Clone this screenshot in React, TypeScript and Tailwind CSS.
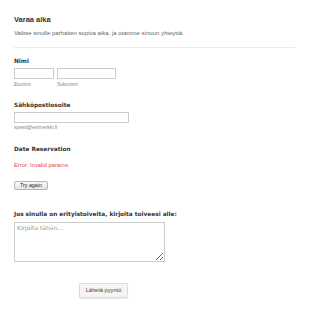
export default function App() {
  return (
    <div className="w-[310px] h-[312px] bg-white font-['Liberation_Sans',Arial,sans-serif] text-[#333]">
      <div className="flex flex-col items-start px-[14px] pt-[15px]">
        <h1 className="text-[7.5px] leading-[10px] font-bold text-[#333]">Varaa aika</h1>
        <p className="mt-[4px] text-[6px] leading-[8px] text-[#666]">
          Valitse sinulle parhaiten sopiva aika, ja otamme sinuun yhteyttä.
        </p>
        <div className="mt-[10px] w-[281px] border-t border-[#ececec]" />

        <label className="mt-[9px] text-[5.8px] leading-[8px] font-bold font-['DejaVu_Sans',sans-serif] text-[#333]">
          Nimi
        </label>
        <div className="mt-[3px] flex gap-[3px]">
          <div className="flex flex-col">
            <input className="w-[40px] h-[11px] border border-[#ccc] bg-white" />
            <span className="mt-[2px] text-[5px] leading-[6px] text-[#888]">Etunimi</span>
          </div>
          <div className="flex flex-col">
            <input className="w-[59px] h-[11px] border border-[#ccc] bg-white" />
            <span className="mt-[2px] text-[5px] leading-[6px] text-[#888]">Sukunimi</span>
          </div>
        </div>

        <label className="mt-[14px] text-[5.8px] leading-[8px] font-bold font-['DejaVu_Sans',sans-serif] text-[#333]">
          Sähköpostiosoite
        </label>
        <input className="mt-[3px] w-[115px] h-[11px] border border-[#ccc] bg-white" />
        <span className="mt-[1px] text-[5px] leading-[6px] text-[#888]">spesti@esimerkki.fi</span>

        <h2 className="mt-[15px] text-[5.8px] leading-[8px] font-bold font-['DejaVu_Sans',sans-serif] text-[#333]">
          Date Reservation
        </h2>
        <p className="mt-[8px] text-[5.8px] leading-[8px] text-[#e8474a]">Error: Invalid params.</p>
        <button className="mt-[12px] h-[9px] px-[5px] flex items-center text-[5.3px] leading-none text-[#222] rounded-[2px] border border-[#b5b5b5] bg-gradient-to-b from-[#fafafa] to-[#e4e4e4]">
          Try again
        </button>

        <label className="mt-[20px] text-[5.8px] leading-[8px] font-bold font-['DejaVu_Sans',sans-serif] text-[#333]">
          Jos sinulla on erityistoiveita, kirjoita toiveesi alle:
        </label>
        <textarea
          placeholder="Kirjoita tähän..."
          className="mt-[4px] w-[151px] h-[40px] px-[2px] py-[1px] border border-[#ccc] bg-white text-[6px] leading-[8px] font-['DejaVu_Sans',sans-serif] placeholder:text-[#999]"
        />

        <button className="mt-[21px] ml-[65px] w-[49px] h-[15px] flex items-center justify-center text-[5.7px] text-[#444] bg-[#f5f5f5] border border-[#dcdcdc] rounded-[1px] shadow-[0_1px_1px_rgba(0,0,0,0.08)]">
          Lähetä pyyntö
        </button>
      </div>
    </div>
  );
}
